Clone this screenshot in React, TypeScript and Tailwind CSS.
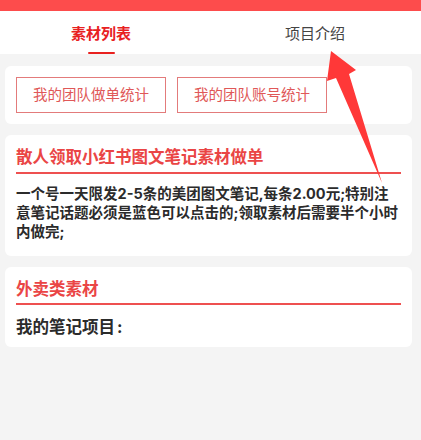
import React from "react";

const cardTitle = "text-[16.5px] leading-[22px] font-bold text-[#ea4545]";

export default function App() {
  return (
    <div
      className="relative w-[421px] h-[440px] overflow-hidden bg-[#f4f4f4]"
      style={{ fontFamily: 'Inter, "Noto Sans CJK SC", sans-serif' }}
    >
      <div className="h-[11px] bg-[#fd4c4c]" />

      <div className="flex h-[43px] bg-white">
        <div className="flex w-[202px] flex-col items-center pt-[13px]">
          <span className="text-[15px] leading-[20px] font-bold text-[#e8211f]">素材列表</span>
          <span className="mt-[8px] h-[3px] w-[27px] rounded-full bg-[#e8211f]" />
        </div>
        <div className="flex flex-1 flex-col items-center pl-[7px] pt-[13px]">
          <span className="text-[15px] leading-[20px] text-[#444]">项目介绍</span>
        </div>
      </div>

      <div className="flex flex-col gap-[11px] pl-[5px] pr-[9px] pt-[12px]">
        <div className="flex gap-[11px] rounded-[6px] bg-white px-[11px] py-[11px]">
          <button className="flex h-[36px] w-[150px] items-center justify-center border border-[#e37b7b] text-[14.5px] text-[#e05858]">
            我的团队做单统计
          </button>
          <button className="flex h-[36px] w-[150px] items-center justify-center border border-[#e37b7b] text-[14.5px] text-[#e05858]">
            我的团队账号统计
          </button>
        </div>

        <div className="rounded-[6px] bg-white px-[11px] pt-[11px] pb-[15px]">
          <div className={cardTitle}>散人领取小红书图文笔记素材做单</div>
          <div className="mt-[4px] h-[2px] bg-[#ee5050]" />
          <p className="mt-[10px] text-[14.5px] leading-[19px] font-bold text-[#2b2b2b]">
            一个号一天限发2-5条的美团图文笔记,每条2.00元;特别注意笔记话题必须是蓝色可以点击的;领取素材后需要半个小时内做完;
          </p>
        </div>

        <div className="rounded-[6px] bg-white px-[11px] pt-[11px] pb-[9px]">
          <div className={cardTitle}>外卖类素材</div>
          <div className="mt-[3px] h-[2px] bg-[#ee5050]" />
          <p className="mt-[11px] text-[16.5px] leading-[22px] font-bold text-[#2b2b2b]">
            我的笔记项目<span className="ml-[2px]">:</span>
          </p>
        </div>
      </div>

      <svg
        className="pointer-events-none absolute inset-0"
        width="421"
        height="440"
        viewBox="0 0 421 440"
      >
        <polygon
          points="331,51 356,70 349,74 382,183 336,78 327,81"
          fill="#ff3838"
        />
      </svg>
    </div>
  );
}
